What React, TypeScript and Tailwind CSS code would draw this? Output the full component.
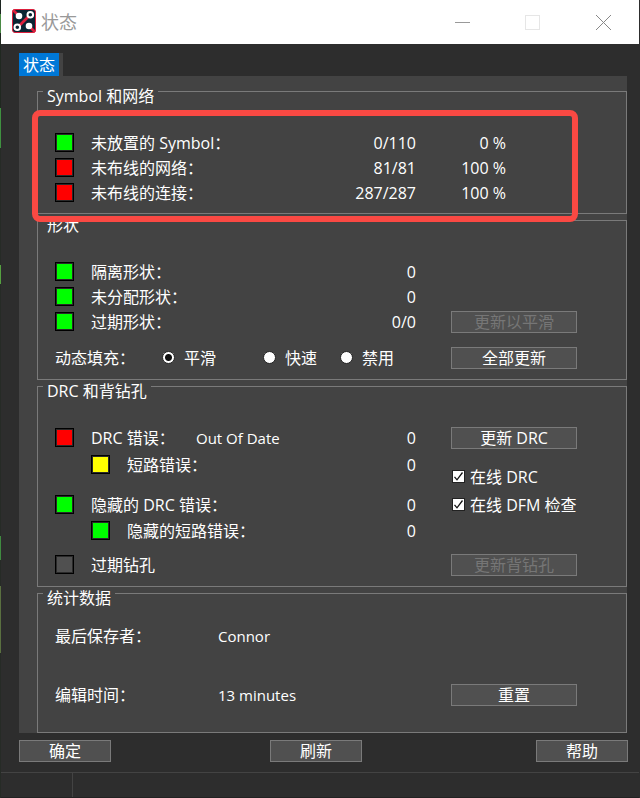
import { useState } from "react";
import type { ReactNode } from "react";

const swatchColors = {
    green: "bg-[#00ff00]",
    red: "bg-[#ff0000]",
    yellow: "bg-[#ffff00]",
    off: "bg-[#505050]",
};

type SwatchColor = keyof typeof swatchColors;

const Swatch = ({ color }: { color: SwatchColor }) => (
    <span className="mr-[17px] size-[19px] shrink-0 border border-black bg-[#2a2a2a] p-px">
        <span className={`block size-full ${swatchColors[color]}`} />
    </span>
);

const Group = ({ title, children }: { title: string; children: ReactNode }) => (
    <fieldset className="min-w-0 border border-[#7a7a7a]">
        {/* The title hangs below the border line */}
        <legend className="ml-[5px] h-[13px] px-1 leading-[22px]">{title}</legend>
        {children}
    </fieldset>
);

const StatusRow = ({ color, label, note, value, percent, nested, className = "", children }: {
    color: SwatchColor;
    label: string;
    note?: string;
    value?: string;
    percent?: string;
    nested?: boolean;
    className?: string;
    children?: ReactNode;
}) => (
    <div className={`flex h-[25px] items-center ${nested ? "pl-[53px]" : "pl-[17px]"} ${className}`}>
        <Swatch color={color} />
        <span className={note ? "w-[105px]" : "flex-1"}>{label}</span>
        {note && <span className="flex-1 text-[15px]">{note}</span>}
        <span className="w-20 text-right">{value}</span>
        {percent && <span className="mr-[120px] w-[90px] text-right">{percent}</span>}
        {children}
    </div>
);

const Side = ({ children }: { children?: ReactNode }) => (
    <div className="flex w-[210px] shrink-0 items-center pl-[35px]">{children}</div>
);

const Button = ({ children, small, disabled, className = "" }: {
    children: ReactNode;
    small?: boolean;
    disabled?: boolean;
    className?: string;
}) => (
    <button
        type="button"
        disabled={disabled}
        className={`flex h-[22px] items-center justify-center border border-[#7a7a7a] bg-[#505050] leading-5 hover:bg-[#5a5a5a] disabled:text-[#767676] ${small ? "w-[92px]" : "w-[126px]"} ${className}`}
    >
        {children}
    </button>
);

const Check = ({ label, className = "" }: { label: string; className?: string }) => (
    <label className={`flex h-[25px] items-center pl-[36px] ${className}`}>
        <span className="mr-[5px] grid">
            <input
                type="checkbox"
                defaultChecked
                className="peer col-start-1 row-start-1 size-[13px] appearance-none border border-[#222222] bg-white"
            />
            <svg
                viewBox="0 0 13 13"
                className="pointer-events-none invisible col-start-1 row-start-1 size-[13px] peer-checked:visible"
                fill="none"
                stroke="#111111"
                strokeWidth="1.3"
            >
                <path d="M2.5 6.8 L5 9.8 L10.5 2.5" />
            </svg>
        </span>
        {label}
    </label>
);

const fillModes = [
    { id: "smooth", label: "平滑", width: "w-[101px]" },
    { id: "rough", label: "快速", width: "w-[77px]" },
    { id: "disabled", label: "禁用", width: "w-[60px]" },
];

export default function App() {
    const [fillMode, setFillMode] = useState("smooth");

    return (
        <div className="flex min-h-screen bg-[#2d2d2d] font-['Open_Sans','Noto_Sans_CJK_SC',sans-serif] text-base leading-6 text-white">
            {/* Sliver of the board behind the window */}
            <div className="w-px bg-[linear-gradient(#1c2420_14px,#4a8a45_14px_33px,#202820_33px_108px,#3f9140_108px_148px,#262b26_148px_265px,#55a040_265px_284px,#262b26_284px_536px,#3f8a40_536px_560px,#262b26_560px_586px,#5a7040_586px_653px,#262b26_653px)]" />

            <div className="flex min-w-0 flex-1 flex-col">
                {/* Title bar */}
                <header className="mr-px flex h-11 items-center bg-white pl-[11px] text-[#999999]">
                    <svg viewBox="0 0 24 24" className="mb-0.5 size-6">
                        <rect x="0.5" y="0.5" width="23" height="23" rx="2.5" fill="#0a2533" stroke="#dc1f3c" />
                        <path d="M1 1 L7 7 M17 17 L23 23 M7 17 L17 7" stroke="#dc1f3c" strokeWidth="2.8" />
                        <circle cx="7" cy="7" r="3.3" fill="#ffffff" />
                        <circle cx="17" cy="17" r="3.3" fill="#ffffff" />
                        <circle cx="18.3" cy="5.7" r="2.8" fill="#0a2533" stroke="#ffffff" strokeWidth="2" />
                        <circle cx="5.3" cy="18.3" r="2.8" fill="#0a2533" stroke="#ffffff" strokeWidth="2" />
                    </svg>
                    <h1 className="ml-[5px] flex-1 text-lg">状态</h1>
                    <button type="button" aria-label="最小化" className="flex h-full w-[69px] items-center justify-center">
                        <svg viewBox="0 0 15 15" className="size-[15px]"><path d="M0 7.5 H15" stroke="#999999" /></svg>
                    </button>
                    <button type="button" aria-label="最大化" disabled className="flex h-full w-[71px] items-center justify-center">
                        <svg viewBox="0 0 15 15" className="size-[15px]"><rect x="0.5" y="0.5" width="14" height="14" fill="none" stroke="#e6e6e6" /></svg>
                    </button>
                    <button type="button" aria-label="关闭" className="flex h-full w-[71px] items-center justify-center">
                        <svg viewBox="0 0 15 15" className="size-[15px]"><path d="M0 0 L15 15 M15 0 L0 15" stroke="#888888" /></svg>
                    </button>
                </header>

                <main className="pl-[18px] pr-3 pt-[9px]">
                    <div className="flex">
                        <button type="button" className="flex h-[23px] w-10 items-center justify-center bg-[#0078d7]">状态</button>
                        <span className="w-1 bg-[#434343]" />
                    </div>

                    <div className="mr-px bg-[#434343] pl-[18px] pt-[9px]">
                        <div className="relative">
                            <Group title="Symbol 和网络">
                                <div className="pb-[8px] pt-8">
                                    <StatusRow color="green" label="未放置的 Symbol：" value="0/110" percent="0 %" />
                                    <StatusRow color="red" label="未布线的网络：" value="81/81" percent="100 %" />
                                    <StatusRow color="red" label="未布线的连接：" value="287/287" percent="100 %" />
                                </div>
                            </Group>
                            {/* Highlight around the counters */}
                            <div className="pointer-events-none absolute -bottom-2 -left-[5px] right-[49px] top-[25px] z-10 rounded-lg border-[6px] border-[#fa4943]" />
                        </div>

                        <Group title="形状">
                            <div className="pb-[9px] pt-8">
                                <StatusRow color="green" label="隔离形状：" value="0"><Side /></StatusRow>
                                <StatusRow color="green" label="未分配形状：" value="0"><Side /></StatusRow>
                                <StatusRow color="green" label="过期形状：" value="0/0">
                                    <Side><Button disabled>更新以平滑</Button></Side>
                                </StatusRow>
                                <div className="mt-[11px] flex h-[25px] items-center pl-[17px]">
                                    <span className="w-[107px]">动态填充：</span>
                                    <div className="flex flex-1">
                                        {fillModes.map((mode) => (
                                            <label key={mode.id} className={`flex items-center gap-[9px] ${mode.width}`}>
                                                <input
                                                    type="radio"
                                                    name="fill"
                                                    checked={fillMode === mode.id}
                                                    onChange={() => setFillMode(mode.id)}
                                                    className="size-[13px] appearance-none rounded-full border border-[#222222] bg-white checked:bg-[radial-gradient(circle,#111111_3px,#ffffff_4px)]"
                                                />
                                                {mode.label}
                                            </label>
                                        ))}
                                    </div>
                                    <Side><Button>全部更新</Button></Side>
                                </div>
                            </div>
                        </Group>

                        <Group title="DRC 和背钻孔">
                            <div className="flex pb-[9px] pt-8">
                                <div className="flex-1">
                                    <StatusRow color="red" label="DRC 错误：" note="Out Of Date" value="0" />
                                    <StatusRow color="yellow" label="短路错误：" value="0" nested className="mt-0.5" />
                                    <StatusRow color="green" label="隐藏的 DRC 错误：" value="0" className="mt-[15px]" />
                                    <StatusRow color="green" label="隐藏的短路错误：" value="0" nested className="mt-px" />
                                    <StatusRow color="off" label="过期钻孔" className="mt-[9px]" />
                                </div>
                                <div className="w-[210px]">
                                    <div className="flex h-[25px] items-center"><Side><Button>更新 DRC</Button></Side></div>
                                    <Check label="在线 DRC" className="mt-[14px]" />
                                    <Check label="在线 DFM 检查" className="mt-[3px]" />
                                    <div className="mt-[35px] flex h-[25px] items-center"><Side><Button disabled>更新背钻孔</Button></Side></div>
                                </div>
                            </div>
                        </Group>

                        <Group title="统计数据">
                            <div className="pb-[25px] pl-[17px] pt-[23px]">
                                <div className="flex h-[25px] items-center">
                                    <span className="w-[163px]">最后保存者：</span>
                                    <span className="text-[15px]">Connor</span>
                                </div>
                                <div className="mt-[34px] flex h-[25px] items-center">
                                    <span className="w-[163px]">编辑时间：</span>
                                    <span className="flex-1 text-[15px]">13 minutes</span>
                                    <Side><Button>重置</Button></Side>
                                </div>
                            </div>
                        </Group>
                    </div>

                    <div className="flex justify-between pb-2.5 pt-[7px]">
                        <Button small>确定</Button>
                        <Button small className="mr-[15px]">刷新</Button>
                        <Button small>帮助</Button>
                    </div>
                </main>

                {/* Status bar */}
                <footer className="mr-px flex h-[26px] border-b border-t border-b-[#222222] border-t-[#434343]">
                    <div className="w-[72px] border-r border-[#434343]" />
                </footer>
            </div>
        </div>
    );
}
